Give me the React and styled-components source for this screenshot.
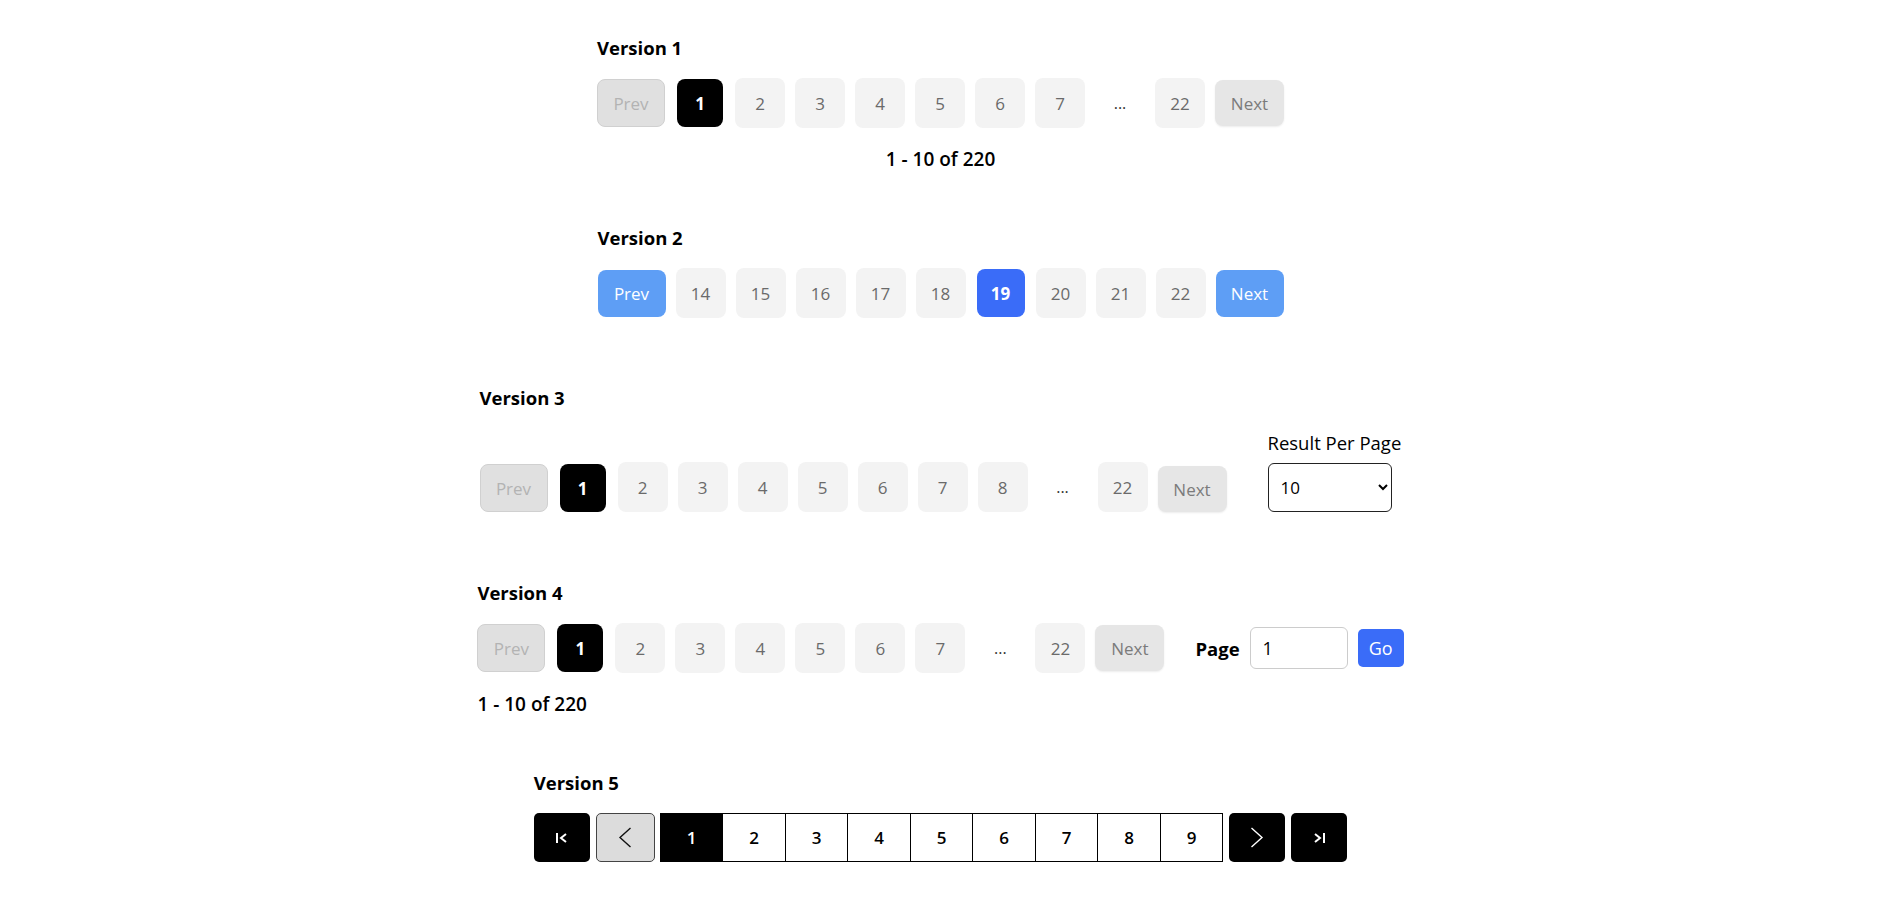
import React from "react";
import styled, { createGlobalStyle, css } from "styled-components";

const GlobalStyle = createGlobalStyle`
  body {
    margin: 0;
    background: #fff;
    font-family: "Open Sans", "Noto Sans", Arial, sans-serif;
    color: #000;
  }
`;

const Page = styled.main`
  display: flex;
  flex-direction: column;
  align-items: center;
  padding-top: 36px;
`;

const Section = styled.section`
  margin-bottom: ${({ $space }) => $space}px;
`;

const Heading = styled.h3`
  margin: 0 0 ${({ $after }) => $after ?? 18}px;
  font-size: 18.5px;
  line-height: 24px;
  font-weight: 700;
`;

const Row = styled.div`
  display: flex;
  align-items: ${({ $align }) => $align || "center"};
  gap: 10px;
`;

const variants = {
  page: css`
    width: 50px;
    height: 50px;
    background: #f3f3f3;
    color: #6a6a6a;
  `,
  active: css`
    width: 46px;
    height: 48px;
    margin: 0 2px;
    background: #000;
    color: #fff;
    font-weight: 700;
  `,
  blueActive: css`
    width: 48px;
    height: 48px;
    margin: 0 1px;
    background: #3a6cf8;
    color: #fff;
    font-weight: 700;
  `,
  disabled: css`
    width: 68px;
    height: 48px;
    background: #e0e0e0;
    border: 1px solid #d0d0d0;
    color: #b3b3b3;
  `,
  next: css`
    width: 69px;
    height: 46px;
    background: #e6e6e6;
    color: #7b7b7b;
    box-shadow: 0 1px 2px rgba(0, 0, 0, 0.08);
  `,
  blue: css`
    width: 68px;
    height: 47px;
    background: #5e9ef5;
    color: #fff;
  `,
};

const PageButton = styled.button`
  box-sizing: border-box;
  display: flex;
  align-items: center;
  justify-content: center;
  padding: 0;
  border: none;
  border-radius: 8px;
  font-family: inherit;
  font-size: 17px;
  cursor: pointer;
  ${({ $variant }) => variants[$variant || "page"]}
`;

const Dots = styled.span`
  width: 50px;
  text-align: center;
  font-size: 16px;
  color: #333;
`;

const Count = styled.div`
  margin-top: 19px;
  font-size: 19px;
  line-height: 24px;
  font-weight: 600;
  text-align: ${({ $center }) => ($center ? "center" : "left")};
`;

const Toolbar = styled.div`
  display: flex;
  align-items: flex-end;
  gap: 41px;
`;

const PerPage = styled.label`
  display: flex;
  flex-direction: column;
  min-width: 134px;
  font-size: 18.5px;
  line-height: 24px;
  gap: 8px;
`;

const Select = styled.select`
  box-sizing: border-box;
  width: 124px;
  height: 49px;
  padding: 0 8px;
  border: 1px solid #222;
  border-radius: 6px;
  background: #fff;
  font-family: inherit;
  font-size: 17px;
  color: #000;
`;

const JumpLabel = styled.span`
  margin-left: 21px;
  font-size: 18.5px;
  font-weight: 700;
`;

const JumpInput = styled.input`
  box-sizing: border-box;
  width: 98px;
  height: 42px;
  padding: 0 12px;
  border: 1px solid #ccc;
  border-radius: 6px;
  font-family: inherit;
  font-size: 18px;
  color: #000;
`;

const GoButton = styled.button`
  width: 46px;
  height: 38px;
  padding: 0;
  border: none;
  border-radius: 5px;
  background: #3a6cf8;
  color: #fff;
  font-family: inherit;
  font-size: 18px;
`;

const BoxRow = styled.div`
  display: flex;
  align-items: center;
`;

const IconButton = styled.button`
  box-sizing: border-box;
  display: flex;
  align-items: center;
  justify-content: center;
  width: ${({ $w }) => $w || 56}px;
  height: 49px;
  padding: 0;
  margin-right: ${({ $mr }) => $mr ?? 6}px;
  border-radius: 5px;
  border: ${({ $light }) => ($light ? "1px solid #444" : "none")};
  background: ${({ $light }) => ($light ? "#dcdcdc" : "#000")};
  color: ${({ $light }) => ($light ? "#111" : "#fff")};
  cursor: pointer;
`;

const Boxes = styled.div`
  display: flex;
  margin-right: 6px;
`;

const Box = styled.button`
  box-sizing: border-box;
  width: 63.5px;
  height: 49px;
  padding: 0;
  margin-left: -1px;
  border: 1px solid #000;
  background: ${({ $active }) => ($active ? "#000" : "#fff")};
  color: ${({ $active }) => ($active ? "#fff" : "#000")};
  font-family: inherit;
  font-size: 17px;
  font-weight: 600;
  &:first-child {
    margin-left: 0;
  }
`;

const FirstIcon = () => (
  <svg width="13" height="12" viewBox="0 0 13 12" fill="none" stroke="currentColor" strokeWidth="2">
    <path d="M2 1v10" />
    <path d="M11 2L6 6L11 10" />
  </svg>
);

const LastIcon = () => (
  <svg width="13" height="12" viewBox="0 0 13 12" fill="none" stroke="currentColor" strokeWidth="2">
    <path d="M2 2L7 6L2 10" />
    <path d="M11 1v10" />
  </svg>
);

const Chevron = ({ dir }) => (
  <svg width="14" height="21" viewBox="0 0 14 21" fill="none" stroke="currentColor" strokeWidth="1.4">
    {dir === "left" ? <path d="M12.5 1L2 10.5L12.5 20" /> : <path d="M1.5 1L12 10.5L1.5 20" />}
  </svg>
);

const App = () => {
  const v1 = [2, 3, 4, 5, 6, 7];
  const v2 = [14, 15, 16, 17, 18, 19, 20, 21, 22];
  const v3 = [2, 3, 4, 5, 6, 7, 8];

  return (
    <>
      <GlobalStyle />
      <Page>
        <Section $space={55}>
          <Heading>Version 1</Heading>
          <Row>
            <PageButton $variant="disabled">Prev</PageButton>
            <PageButton $variant="active">1</PageButton>
            {v1.map((n) => (
              <PageButton key={n}>{n}</PageButton>
            ))}
            <Dots>...</Dots>
            <PageButton>22</PageButton>
            <PageButton $variant="next">Next</PageButton>
          </Row>
          <Count $center>1 - 10 of 220</Count>
        </Section>

        <Section $space={68}>
          <Heading>Version 2</Heading>
          <Row>
            <PageButton $variant="blue">Prev</PageButton>
            {v2.map((n) => (
              <PageButton key={n} $variant={n === 19 ? "blueActive" : "page"}>
                {n}
              </PageButton>
            ))}
            <PageButton $variant="blue">Next</PageButton>
          </Row>
        </Section>

        <Section $space={69}>
          <Heading $after={21}>Version 3</Heading>
          <Toolbar>
            <Row $align="flex-end">
              <PageButton $variant="disabled">Prev</PageButton>
              <PageButton $variant="active">1</PageButton>
              {v3.map((n) => (
                <PageButton key={n}>{n}</PageButton>
              ))}
              <Dots style={{ alignSelf: "center" }}>...</Dots>
              <PageButton>22</PageButton>
              <PageButton $variant="next">Next</PageButton>
            </Row>
            <PerPage>
              Result Per Page
              <Select defaultValue="10">
                <option value="10">10</option>
                <option value="20">20</option>
                <option value="50">50</option>
              </Select>
            </PerPage>
          </Toolbar>
        </Section>

        <Section $space={55}>
          <Heading>Version 4</Heading>
          <Row>
            <PageButton $variant="disabled">Prev</PageButton>
            <PageButton $variant="active">1</PageButton>
            {v1.map((n) => (
              <PageButton key={n}>{n}</PageButton>
            ))}
            <Dots>...</Dots>
            <PageButton>22</PageButton>
            <PageButton $variant="next">Next</PageButton>
            <JumpLabel>Page</JumpLabel>
            <JumpInput defaultValue="1" />
            <GoButton>Go</GoButton>
          </Row>
          <Count>1 - 10 of 220</Count>
        </Section>

        <Section $space={40}>
          <Heading>Version 5</Heading>
          <BoxRow>
            <IconButton>
              <FirstIcon />
            </IconButton>
            <IconButton $light $w={59} $mr={5}>
              <Chevron dir="left" />
            </IconButton>
            <Boxes>
              {[1, 2, 3, 4, 5, 6, 7, 8, 9].map((n) => (
                <Box key={n} $active={n === 1}>
                  {n}
                </Box>
              ))}
            </Boxes>
            <IconButton>
              <Chevron dir="right" />
            </IconButton>
            <IconButton $mr={0}>
              <LastIcon />
            </IconButton>
          </BoxRow>
        </Section>
      </Page>
    </>
  );
};

export default App;
